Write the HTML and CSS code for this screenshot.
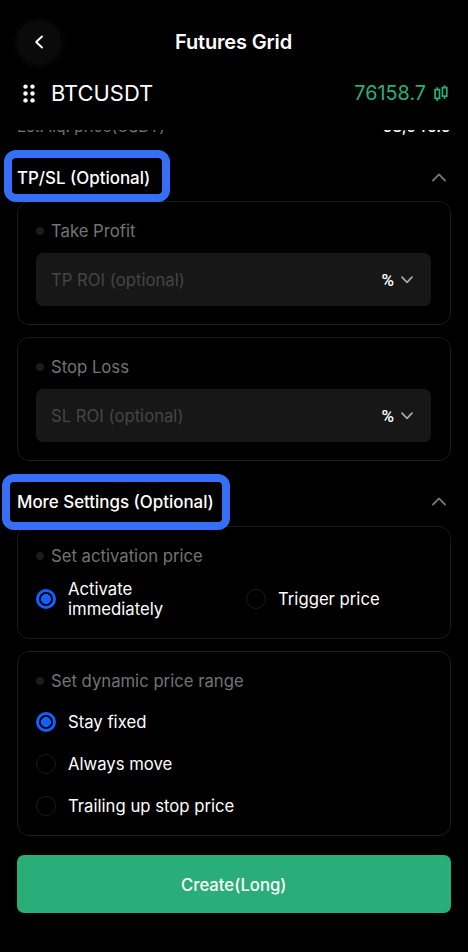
FILE: index.html
```html
<!DOCTYPE html>
<html lang="en">
<head>
<meta charset="utf-8">
<title>Futures Grid</title>
<link rel="stylesheet" href="styles.css">
</head>
<body>
<div class="app">
  <header class="topbar">
    <button class="back" aria-label="Back">
      <svg width="10" height="14" viewBox="0 0 10 14"><path d="M8 1.5 2.2 7 8 12.5"/></svg>
    </button>
    <h1 class="title">Futures Grid</h1>
  </header>

  <div class="pair">
    <svg class="dots" width="12" height="19" viewBox="0 0 12 19">
      <circle cx="2.5" cy="2.6" r="2.2"/><circle cx="9.5" cy="2.6" r="2.2"/>
      <circle cx="2.5" cy="9.5" r="2.2"/><circle cx="9.5" cy="9.5" r="2.2"/>
      <circle cx="2.5" cy="16.4" r="2.2"/><circle cx="9.5" cy="16.4" r="2.2"/>
    </svg>
    <span class="symbol">BTCUSDT</span>
    <span class="price">76158.7</span>
    <svg class="candles" width="14" height="17" viewBox="0 0 14 17">
      <path d="M3.3 2.2v2.6M3.3 13.5v2.5M1.1 4.6h4.4v8.8H1.1zM10.6.3v2.3M10.6 11v3M8.4 2.6h4.4v8.6H8.4z"/>
    </svg>
  </div>

  <main class="scroll">
    <div class="estimate"><span class="est-label">Est. liq. price(USDT)</span><span class="est-value">68,946.6</span></div>

    <div class="section">
      <h2 class="heading heading-tp">TP/SL (Optional)</h2>
      <svg class="up" width="14" height="9" viewBox="0 0 14 9"><path d="M1 7.5 7 1.4l6 6.1"/></svg>
    </div>
    <div class="card">
      <div class="label">Take Profit</div>
      <div class="field"><span class="hint">TP ROI (optional)</span><span class="unit">%</span><svg width="12" height="8" viewBox="0 0 12 8"><path d="M1 1.2 6 6.3l5-5.1"/></svg></div>
    </div>
    <div class="card">
      <div class="label">Stop Loss</div>
      <div class="field"><span class="hint">SL ROI (optional)</span><span class="unit">%</span><svg width="12" height="8" viewBox="0 0 12 8"><path d="M1 1.2 6 6.3l5-5.1"/></svg></div>
    </div>

    <div class="section section-more">
      <h2 class="heading heading-more">More Settings (Optional)</h2>
      <svg class="up" width="14" height="9" viewBox="0 0 14 9"><path d="M1 7.5 7 1.4l6 6.1"/></svg>
    </div>
    <div class="card card-activation">
      <div class="label">Set activation price</div>
      <div class="columns">
        <div class="option"><i class="radio on"></i><span>Activate<br>immediately</span></div>
        <div class="option"><i class="radio"></i><span>Trigger price</span></div>
      </div>
    </div>
    <div class="card card-range">
      <div class="label">Set dynamic price range</div>
      <div class="rows">
        <div class="option"><i class="radio on"></i><span>Stay fixed</span></div>
        <div class="option"><i class="radio"></i><span>Always move</span></div>
        <div class="option"><i class="radio"></i><span>Trailing up stop price</span></div>
      </div>
    </div>
    <button class="create">Create(Long)</button>
  </main>
</div>
</body>
</html>
```
FILE: styles.css
```css
*, *::before, *::after { box-sizing: border-box; }
body {
  margin: 0;
  background: #000;
  color: #fff;
  font: 400 16.7px/22px Inter, "Liberation Sans", sans-serif;
}
button { border: 0; padding: 0; color: inherit; font: inherit; }
svg { flex: none; fill: none; stroke-linecap: round; stroke-linejoin: round; }
.app { height: 952px; display: flex; flex-direction: column; overflow: hidden; }

.topbar {
  display: grid;
  grid-template-columns: 44px 1fr 44px;
  align-items: center;
  height: 83px;
  padding: 0 18px 0 17px;
}
.back {
  width: 44px;
  height: 44px;
  display: grid;
  place-items: center;
  border-radius: 50%;
  background: #0a0a0a;
  box-shadow: 0 1px 6px 1px #0c0c0c;
}
.back svg { stroke: #fff; stroke-width: 1.9; }
.title { margin: 0; text-align: center; font-size: 20px; font-weight: 600; letter-spacing: -0.15px; }

.pair { display: flex; align-items: center; height: 47px; padding: 0 20px 27px 23px; }
.dots { fill: #fff; }
.symbol { margin-left: 16px; font-size: 21.9px; }
.price { margin-left: auto; color: #29ae79; font-size: 19.8px; }
.candles { margin-left: 8px; stroke: #29ae79; stroke-width: 1.7; stroke-linejoin: miter; stroke-linecap: butt; }

.scroll { flex: 1; padding: 0 17.5px 0 17px; overflow: hidden; }
.estimate { display: flex; justify-content: space-between; height: 22px; margin-top: -14px; margin-bottom: 15px; font-size: 15.5px; }
.est-label { color: #777; }
.est-value { font-size: 15.8px; font-weight: 500; }

.section { display: flex; align-items: center; justify-content: space-between; height: 48px; padding-right: 5px; }
.section-more { height: 65px; padding-top: 16px; }
.up { stroke: #747474; stroke-width: 1.8; }
.heading { position: relative; margin: 0; font-size: 16.9px; font-weight: 500; }
.heading-tp { padding-top: 1px; }
.heading::after {
  content: "";
  position: absolute;
  z-index: 1;
  border: 8px solid #356ff5;
  border-radius: 12px;
}
.heading-tp::after { left: -13px; top: -16px; width: 166px; height: 52px; }
.heading-more::after { left: -15px; top: -17px; width: 228px; height: 56px; }

.card { height: 124px; padding: 18px; border: 1px solid #1b1b1b; border-radius: 12px; }
.card + .card { margin-top: 12px; }
.card-activation { height: 113px; }
.card-range { height: 185px; }
.label { display: flex; align-items: center; gap: 7px; color: #747474; }
.label::before { content: ""; width: 8px; height: 8px; border-radius: 50%; background: #1b1b1b; }
.field {
  display: flex;
  align-items: center;
  height: 53px;
  margin: 11px 0.5px 0 0;
  padding: 0 18px 0 15px;
  border-radius: 7px;
  background: #171717;
}
.field svg { margin-left: 7px; stroke: #aaa; stroke-width: 1.7; }
.hint { flex: 1; color: #454545; }
.unit { font: 500 17px/22px Roboto, sans-serif; }

.columns { display: grid; grid-template-columns: 210px 1fr; align-items: center; height: 40px; margin-top: 12px; line-height: 20px; }
.rows { display: grid; gap: 22px; margin-top: 20px; line-height: 20px; }
.option { display: flex; align-items: center; gap: 12px; }
.radio { flex: none; width: 20px; height: 20px; border: 1px solid #1b1b1b; border-radius: 50%; }
.radio.on { border: 3px solid #1260ff; background: radial-gradient(circle, #1260ff 4.7px, #000 5.3px); }

.create { display: block; width: 100%; height: 58px; margin-top: 19px; padding-top: 1px; border-radius: 7px; background: #29ae79; font-weight: 500; }
```
